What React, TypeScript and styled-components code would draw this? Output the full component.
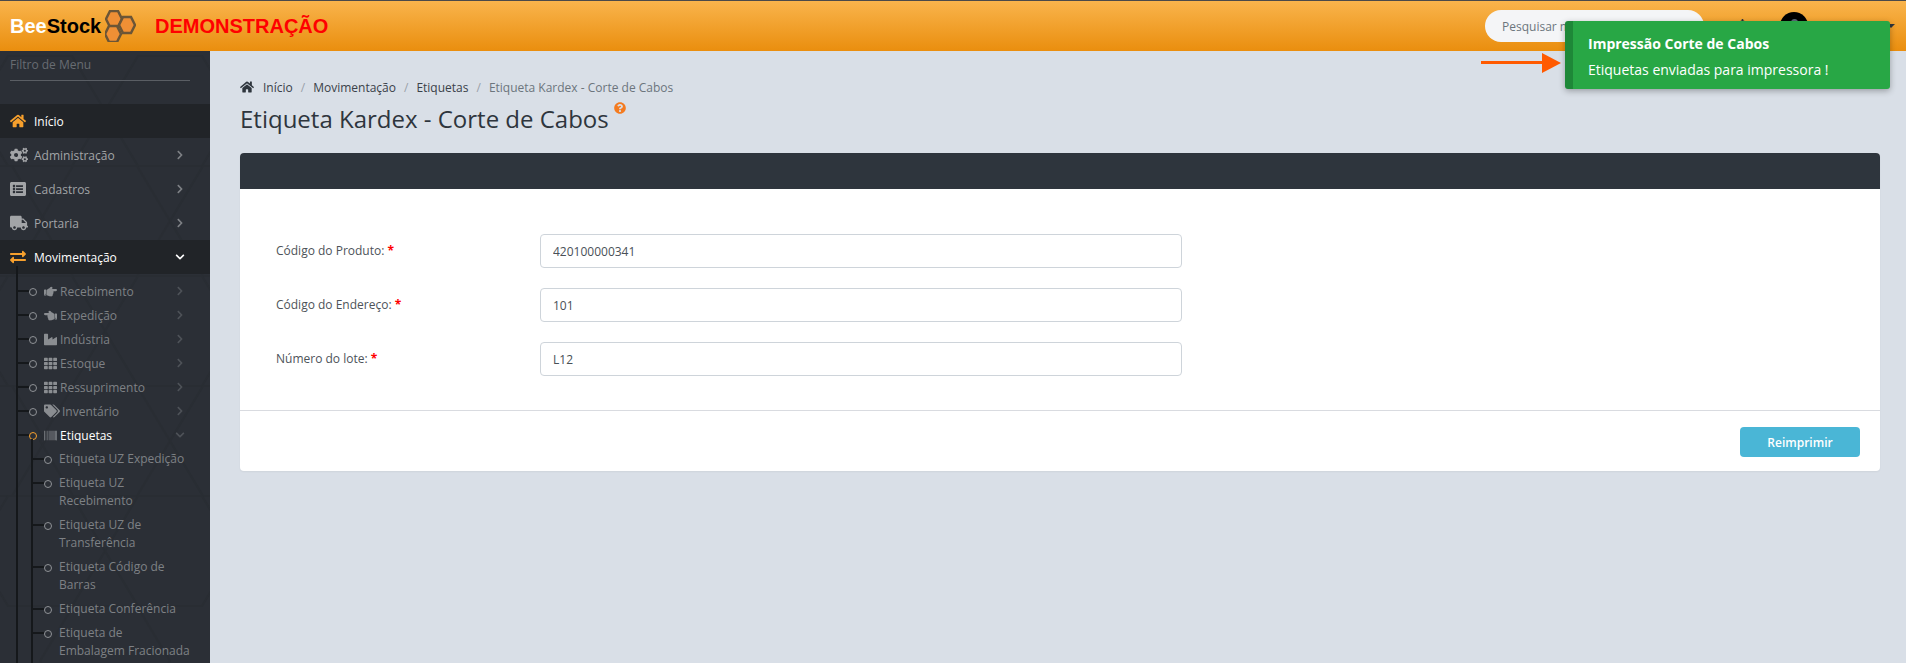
import React from 'react';
import styled, { createGlobalStyle } from 'styled-components';
import {
  FaBarcode,
  FaBell,
  FaChevronDown,
  FaChevronRight,
  FaCogs,
  FaExchangeAlt,
  FaHandPointLeft,
  FaHandPointRight,
  FaHome,
  FaIndustry,
  FaListAlt,
  FaQuestionCircle,
  FaSearch,
  FaTags,
  FaTh,
  FaTruck,
} from 'react-icons/fa';

const GlobalStyle = createGlobalStyle`
  html, body {
    margin: 0;
    height: 663px;
    overflow: hidden;
    background: #d9dfe7;
    font-family: "Open Sans", "Liberation Sans", sans-serif;
  }
  * { box-sizing: border-box; }
`;

const Page = styled.div`
  width: 1906px;
  height: 663px;
  display: flex;
  flex-direction: column;
  position: relative;
  overflow: hidden;
`;

const TopBar = styled.header`
  height: 51px;
  flex: none;
  display: flex;
  align-items: center;
  padding-left: 10px;
  border-top: 1px solid #4a4a4a;
  background: linear-gradient(to bottom, #f9b44c, #ea8e0e);
`;

const Brand = styled.div`
  width: 95px;
  font: bold 20px "Liberation Sans", Arial, sans-serif;
  color: #000;
  span { color: #fff; }
`;

const Demo = styled.div`
  font: bold 20px "Liberation Sans", Arial, sans-serif;
  color: #ff0000;
  margin-left: 19px;
`;

const TopRight = styled.div`
  margin-left: auto;
  display: flex;
  align-items: center;
`;

const SearchBox = styled.div`
  width: 219px;
  height: 32px;
  border-radius: 16px;
  background: #f4f5f7;
  color: #6c757d;
  font-size: 12px;
  display: flex;
  align-items: center;
  justify-content: space-between;
  padding: 0 16px 0 17px;
  svg { color: #2e353d; font-size: 11px; }
`;

const BellButton = styled.div`
  margin-left: 31px;
  color: #2e353d;
  font-size: 15px;
  display: flex;
`;

const Avatar = styled.div`
  margin-left: 30px;
  width: 28px;
  height: 28px;
  border-radius: 50%;
  background: #000;
  display: flex;
  justify-content: center;
  padding-top: 7px;
  &::after {
    content: '';
    width: 7px;
    height: 7px;
    border-radius: 50%;
    background: #5a6a78;
  }
`;

const UserCaret = styled.div`
  margin: 0 11px 0 79px;
  width: 0;
  height: 0;
  border-left: 4px solid transparent;
  border-right: 4px solid transparent;
  border-top: 4px solid #2e353d;
`;

const Body = styled.div`
  flex: 1;
  display: flex;
  min-height: 0;
`;

const Sidebar = styled.aside`
  width: 210px;
  flex: none;
  background: #2b2f36;
  position: relative;
  overflow: hidden;
`;

const Honeycomb = styled.svg`
  position: absolute;
  inset: 0;
  width: 210px;
  height: 612px;
`;

const FilterBox = styled.div`
  position: relative;
  margin: 0 20px 0 10px;
  height: 30px;
  padding-top: 5px;
  border-bottom: 1px solid #5a5e64;
  color: #686c72;
  font-size: 12px;
  line-height: 17px;
`;

const Menu = styled.nav`
  position: relative;
  margin-top: 23px;
`;

const MenuRow = styled.div<{ $active?: boolean }>`
  height: 34px;
  display: flex;
  align-items: center;
  padding-left: 10px;
  font-size: 12px;
  font-weight: 500;
  color: ${p => (p.$active ? '#fff' : '#a2a4a7')};
  background: ${p => (p.$active ? '#212428' : 'transparent')};
`;

const MenuIcon = styled.span<{ $orange?: boolean }>`
  width: 24px;
  flex: none;
  display: flex;
  color: ${p => (p.$orange ? '#f7a02d' : '#a2a4a7')};
`;

const Chevron = styled.span<{ $bright?: boolean; $dim?: boolean }>`
  margin-left: auto;
  margin-right: 25px;
  display: flex;
  font-size: 10px;
  color: ${p => (p.$bright ? '#fff' : p.$dim ? '#4e5258' : '#7e8185')};
`;

const SubList = styled.div`
  position: relative;
  padding-top: 5px;
  &::before {
    content: '';
    position: absolute;
    left: 16px;
    top: -8px;
    bottom: -400px;
    width: 2px;
    background: #15181b;
  }
`;

const SubRow = styled.div<{ $active?: boolean }>`
  position: relative;
  height: 24px;
  display: flex;
  align-items: center;
  padding-left: 44px;
  font-size: 12px;
  color: ${p => (p.$active ? '#fff' : '#7e8185')};
  &::before {
    content: '';
    position: absolute;
    left: 18px;
    top: 11px;
    width: 11px;
    height: 2px;
    background: #15181b;
  }
  &::after {
    content: '';
    position: absolute;
    left: 29px;
    top: 9px;
    width: 6px;
    height: 6px;
    border-radius: 50%;
    border: 1px solid ${p => (p.$active ? '#f7a02d' : '#8f9296')};
  }
`;

const SubIcon = styled.span<{ $wide?: boolean }>`
  width: ${p => (p.$wide ? '18px' : '16px')};
  flex: none;
  display: flex;
  color: #8a8d91;
`;

const LeafList = styled.div`
  position: relative;
  &::before {
    content: '';
    position: absolute;
    left: 31px;
    top: -8px;
    bottom: -100px;
    width: 2px;
    background: #15181b;
  }
`;

const LeafRow = styled.div`
  position: relative;
  padding: 3px 20px 3px 59px;
  font-size: 12px;
  line-height: 18px;
  color: #7e8185;
  &::before {
    content: '';
    position: absolute;
    left: 33px;
    top: 11px;
    width: 11px;
    height: 2px;
    background: #15181b;
  }
  &::after {
    content: '';
    position: absolute;
    left: 44px;
    top: 9px;
    width: 6px;
    height: 6px;
    border-radius: 50%;
    border: 1px solid #8f9296;
  }
`;

const Main = styled.main`
  flex: 1;
  padding: 27px 26px 0 30px;
  min-width: 0;
`;

const Breadcrumb = styled.div`
  display: flex;
  align-items: center;
  height: 18px;
  font-size: 12px;
  color: #2e353d;
  svg { margin-right: 9px; }
`;

const Crumb = styled.span<{ $current?: boolean }>`
  color: ${p => (p.$current ? '#6c757d' : '#3a4149')};
`;

const CrumbSep = styled.span`
  color: #9aa1a9;
  margin: 0 8px;
`;

const TitleRow = styled.div`
  display: flex;
  align-items: flex-start;
  margin-top: 6px;
  height: 39px;
`;

const Title = styled.h1`
  margin: 0;
  font-size: 24px;
  font-weight: 400;
  line-height: 33px;
  color: #2e353d;
`;

const Help = styled.span`
  margin: 0 0 0 5px;
  display: flex;
  color: #f47b20;
`;

const Card = styled.section`
  margin-top: 12px;
  height: 318px;
  border-radius: 4px;
  background: #fff;
  overflow: hidden;
  box-shadow: 0 1px 2px rgba(0, 0, 0, 0.05);
  display: flex;
  flex-direction: column;
`;

const CardHeader = styled.div`
  height: 36px;
  background: #2e353d;
`;

const Form = styled.div`
  height: 222px;
  padding: 45px 36px 0;
  border-bottom: 1px solid #d9dbe0;
  display: flex;
  flex-direction: column;
  gap: 20px;
`;

const FieldRow = styled.div`
  display: flex;
  align-items: center;
  height: 34px;
`;

const FieldLabel = styled.label`
  width: 264px;
  padding-bottom: 2px;
  font-size: 12px;
  color: #4d5359;
  em { font-style: normal; font-weight: 700; color: #ff0000; }
`;

const FieldInput = styled.input`
  width: 642px;
  height: 34px;
  padding: 0 12px;
  font: 12px "Open Sans", sans-serif;
  color: #495057;
  background: #fff;
  border: 1px solid #ced4da;
  border-radius: 4px;
  outline: none;
`;

const CardFooter = styled.div`
  flex: 1;
  display: flex;
  justify-content: flex-end;
  padding: 16px 20px 0 0;
`;

const PrintButton = styled.button`
  width: 120px;
  height: 30px;
  border: none;
  border-radius: 4px;
  background: #4ab6d6;
  color: #fff;
  font: 600 12px "Open Sans", sans-serif;
`;

const Toast = styled.div`
  position: absolute;
  left: 1565px;
  top: 21px;
  width: 325px;
  height: 68px;
  border-radius: 3px;
  border-left: 8px solid #1e8838;
  background: #28a745;
  color: #fff;
  padding: 13px 15px;
  box-shadow: 0 2px 6px rgba(0, 0, 0, 0.3);
`;

const ToastTitle = styled.div`
  font-size: 14px;
  font-weight: 700;
  line-height: 20px;
`;

const ToastText = styled.div`
  margin-top: 6px;
  font-size: 14px;
  line-height: 20px;
`;

const Arrow = styled.svg`
  position: absolute;
  left: 1481px;
  top: 52px;
`;

const subItems = [
  { label: 'Recebimento', icon: <FaHandPointRight size={13} /> },
  { label: 'Expedição', icon: <FaHandPointLeft size={13} /> },
  { label: 'Indústria', icon: <FaIndustry size={13} /> },
  { label: 'Estoque', icon: <FaTh size={13} /> },
  { label: 'Ressuprimento', icon: <FaTh size={13} /> },
  { label: 'Inventário', icon: <FaTags size={16} />, wide: true },
];

const leafItems = [
  'Etiqueta UZ Expedição',
  'Etiqueta UZ Recebimento',
  'Etiqueta UZ de Transferência',
  'Etiqueta Código de Barras',
  'Etiqueta Conferência',
  'Etiqueta de Embalagem Fracionada',
];

const hexagons = [
  [40, 60], [170, 60], [105, 170], [-20, 170], [235, 170],
  [40, 280], [170, 280], [105, 390], [-20, 390], [235, 390],
  [40, 500], [170, 500], [105, 610],
];

const combCells = [[1, 1], [14, 7], [0, 16]];

const App: React.FC = () => {
  return (
    <Page>
      <GlobalStyle />
      <TopBar>
        <Brand><span>Bee</span>Stock</Brand>
        <svg width="31" height="32" viewBox="0 0 31 32">
          {combCells.map(([x, y]) => (
            <polygon
              key={`${x}-${y}`}
              points={`${x + 4},${y} ${x + 12},${y} ${x + 16},${y + 8} ${x + 12},${y + 16} ${x + 4},${y + 16} ${x},${y + 8}`}
              fill="#ef8f35"
              stroke="#6b5536"
              strokeWidth="2.5"
            />
          ))}
        </svg>
        <Demo>DEMONSTRAÇÃO</Demo>
        <TopRight>
          <SearchBox>Pesquisar menu<FaSearch /></SearchBox>
          <BellButton><FaBell /></BellButton>
          <Avatar />
          <UserCaret />
        </TopRight>
      </TopBar>
      <Body>
        <Sidebar>
          <Honeycomb viewBox="0 0 210 612">
            {hexagons.map(([x, y]) => (
              <polygon
                key={`${x}-${y}`}
                points={`${x - 65},${y} ${x - 32},${y - 55} ${x + 32},${y - 55} ${x + 65},${y} ${x + 32},${y + 55} ${x - 32},${y + 55}`}
                fill="none"
                stroke="#292d33"
                strokeWidth="2"
              />
            ))}
          </Honeycomb>
          <FilterBox>Filtro de Menu</FilterBox>
          <Menu>
            <MenuRow $active>
              <MenuIcon $orange><FaHome size={16} /></MenuIcon>Início
            </MenuRow>
            <MenuRow>
              <MenuIcon><FaCogs size={18} /></MenuIcon>Administração
              <Chevron><FaChevronRight /></Chevron>
            </MenuRow>
            <MenuRow>
              <MenuIcon><FaListAlt size={16} /></MenuIcon>Cadastros
              <Chevron><FaChevronRight /></Chevron>
            </MenuRow>
            <MenuRow>
              <MenuIcon><FaTruck size={18} /></MenuIcon>Portaria
              <Chevron><FaChevronRight /></Chevron>
            </MenuRow>
            <MenuRow $active>
              <MenuIcon $orange><FaExchangeAlt size={16} /></MenuIcon>Movimentação
              <Chevron $bright><FaChevronDown /></Chevron>
            </MenuRow>
            <SubList>
              {subItems.map(item => (
                <SubRow key={item.label}>
                  <SubIcon $wide={item.wide}>{item.icon}</SubIcon>
                  {item.label}
                  <Chevron $dim><FaChevronRight /></Chevron>
                </SubRow>
              ))}
              <SubRow $active>
                <SubIcon><FaBarcode size={13} /></SubIcon>Etiquetas
                <Chevron $dim><FaChevronDown /></Chevron>
              </SubRow>
              <LeafList>
                {leafItems.map(leaf => <LeafRow key={leaf}>{leaf}</LeafRow>)}
              </LeafList>
            </SubList>
          </Menu>
        </Sidebar>
        <Main>
          <Breadcrumb>
            <FaHome size={14} />
            <Crumb>Início</Crumb><CrumbSep>/</CrumbSep>
            <Crumb>Movimentação</Crumb><CrumbSep>/</CrumbSep>
            <Crumb>Etiquetas</Crumb><CrumbSep>/</CrumbSep>
            <Crumb $current>Etiqueta Kardex - Corte de Cabos</Crumb>
          </Breadcrumb>
          <TitleRow>
            <Title>Etiqueta Kardex - Corte de Cabos</Title>
            <Help><FaQuestionCircle size={12} /></Help>
          </TitleRow>
          <Card>
            <CardHeader />
            <Form>
              <FieldRow>
                <FieldLabel>Código do Produto: <em>*</em></FieldLabel>
                <FieldInput readOnly value="420100000341" />
              </FieldRow>
              <FieldRow>
                <FieldLabel>Código do Endereço: <em>*</em></FieldLabel>
                <FieldInput readOnly value="101" />
              </FieldRow>
              <FieldRow>
                <FieldLabel>Número do lote: <em>*</em></FieldLabel>
                <FieldInput readOnly value="L12" />
              </FieldRow>
            </Form>
            <CardFooter>
              <PrintButton>Reimprimir</PrintButton>
            </CardFooter>
          </Card>
        </Main>
      </Body>
      <Arrow width="80" height="22" viewBox="0 0 80 22">
        <rect x="0" y="9" width="62" height="3" fill="#ff5a00" />
        <polygon points="61,1 80,11 61,21" fill="#ff5a00" />
      </Arrow>
      <Toast>
        <ToastTitle>Impressão Corte de Cabos</ToastTitle>
        <ToastText>Etiquetas enviadas para impressora !</ToastText>
      </Toast>
    </Page>
  );
};

export default App;
